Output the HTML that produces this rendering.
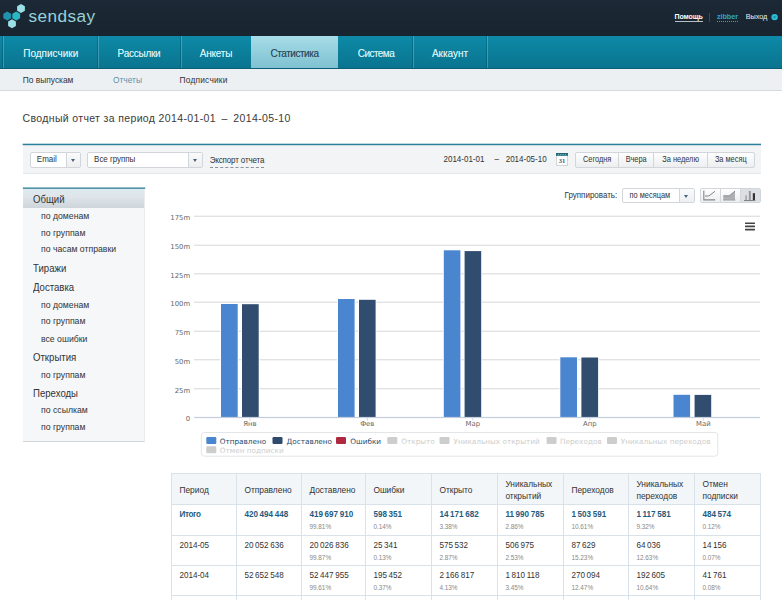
<!DOCTYPE html>
<html lang="ru">
<head>
<meta charset="utf-8">
<title>Sendsay — Сводный отчет</title>
<style>
*{box-sizing:border-box;margin:0;padding:0}
html,body{width:782px;height:600px;overflow:hidden;background:#fff}
body{font-family:"Liberation Sans","DejaVu Sans",sans-serif;color:#333;position:relative;font-size:8.4px}
.abs{position:absolute}
.t{position:absolute;white-space:nowrap;line-height:12px}
.y{display:inline-block;transform:scaleY(1.16);transform-origin:50% 64%}
#top{left:0;top:0;width:782px;height:36px;background:linear-gradient(#1c2936,#18242f)}
#logo-text{left:28.600px;top:6.0px;font-size:17.200px;color:#97d2d8;letter-spacing:.4px;line-height:20px}
#nav{left:0;top:35.500px;width:782px;height:33px;background:linear-gradient(#0d8aa8,#0a748f);border-bottom:1px solid #0a5f77}
.tab{position:absolute;top:0;height:32px;line-height:36px;text-align:center;color:#d2f1f6;font-size:10px;text-shadow:0 0 .5px rgba(210,241,246,.7);border-left:1px solid rgba(0,60,80,.3);box-shadow:inset 1px 0 0 rgba(255,255,255,.22);white-space:nowrap}
.tab.act{background:linear-gradient(#a6dce7,#7fc1d1);color:#2f4c5f;border-left:0;box-shadow:none;text-shadow:0 0 .4px rgba(47,76,95,.6)}
#sub{left:0;top:68.500px;width:782px;height:22px;background:#edf0f3;border-bottom:1px solid #d5dadf}
#sub span{position:absolute;top:0;line-height:22px;font-size:8.400px;color:#333;white-space:nowrap}
#title{left:22.500px;top:109.500px;font-size:10.500px;color:#3a3a3a;line-height:16px;white-space:nowrap;letter-spacing:.36px}
#tb{left:23px;top:144px;width:738px;height:30px;background:#f2f4f6;border-bottom:1px solid #e4e7ea}
.sel{position:absolute;height:16px;background:#fff;border:1px solid #d2d6db;border-radius:2px;font-size:8px;line-height:14px;color:#333;white-space:nowrap}
.sel i{position:absolute;right:0;top:0;width:14px;height:14px;border-left:1px solid #d2d6db;background:linear-gradient(#fafbfb,#eceef0)}
.sel i:after{content:"";position:absolute;left:4px;top:6px;border:2.500px solid transparent;border-top:3px solid #46627a}
.btns{position:absolute;border:1px solid #d2d6db;border-radius:2px;background:linear-gradient(#fefefe,#eceef0);overflow:hidden}
.btns b{position:absolute;top:0;height:100%;font-weight:normal;font-size:7.400px;line-height:13px;color:#333;text-align:center;border-left:1px solid #d2d6db;white-space:nowrap}
.btns b:first-child{border-left:0}
#side{left:23px;top:188px;width:122px;height:253.500px;background:#f5f7f9;border-top:1px solid #f5f7f9;border-bottom:1px solid #d3d7db;border-right:1px solid #eaedf0}
#side .on{position:absolute;left:0;top:0;width:100%;height:19px;background:linear-gradient(#dcebf0,#dfe5ea 40%,#cdd5db)}
#side .h{font-size:9.600px;color:#333;left:10px;transform:scaleY(1.1);transform-origin:0 25%}
#side .s{font-size:8.700px;color:#333;left:18px}
table{border-collapse:collapse;position:absolute;left:171px;top:473px;width:589px;font-size:8.400px;color:#333;table-layout:fixed}
td,th{border:1px solid #d9e1e9;text-align:left;vertical-align:top;padding:4px 0 0 7.400px;font-weight:normal;line-height:11px;white-space:nowrap}
th{background:#f2f6f9;height:31px;vertical-align:middle;padding-top:3px;line-height:11.500px}
td{height:30.330px;font-size:8.100px;word-spacing:-.6px}
td small{display:block;font-size:6.400px;color:#888;line-height:9px;margin-top:2px;word-spacing:0}
.yh{display:inline-block;transform:scaleY(1.06);transform-origin:0 60%}
.yd{display:inline-block;transform:scaleY(1.1);transform-origin:0 72%}
tr.tot td:first-child{letter-spacing:-.3px}
tr.tot td{color:#1f5c7e;font-weight:bold;height:30.800px}
tr.r2 td{height:30.100px}
tr.tot td small{font-weight:normal;color:#888}
</style>
</head>
<body>
<div id="top" class="abs">
  <svg class="abs" style="left:0;top:0" width="30" height="34" viewBox="0 0 30 34">
    <polygon points="21,3.900 24.900,6.150 24.900,10.650 21,12.900 17.100,10.650 17.100,6.150" fill="#9ae0e5"/>
    <polygon points="7.200,11.400 11.100,13.650 11.100,18.150 7.200,20.400 3.300,18.150 3.300,13.650" fill="#1f93ae"/>
    <polygon points="16.200,11.400 20.100,13.650 20.100,18.150 16.200,20.400 12.300,18.150 12.300,13.650" fill="#2bb6c4"/>
    <polygon points="12,19.200 15.900,21.450 15.900,25.950 12,28.200 8.100,25.950 8.100,21.450" fill="#9adfe6"/>
  </svg>
  <div id="logo-text" class="abs">sendsay</div>
  <span class="t" style="left:674.500px;top:12.500px;font-size:7px;font-weight:bold;color:#fff;border-bottom:1px solid #b9c0c6;line-height:8.500px;letter-spacing:-.1px">Помощь</span>
  <span class="abs" style="left:709px;top:13px;width:1px;height:9px;background:#3b4957"></span>
  <span class="t" style="left:717px;top:12.500px;font-size:7.300px;font-weight:bold;color:#2fa5ca;border-bottom:1px dotted #2fa5ca;line-height:8.500px;letter-spacing:-.1px">zibber</span>
  <span class="t" style="left:745.700px;top:12.500px;font-size:7.300px;color:#e8edf0;line-height:8.500px;letter-spacing:-.05px">Выход</span>
  <svg class="abs" style="left:770px;top:12px" width="10" height="10" viewBox="770 12 10 10"><circle cx="774.600" cy="17.100" r="3.200" fill="#2ebfd5"/><circle cx="774.600" cy="17.100" r="1.200" fill="#1d8da5"/></svg>
</div>
<div id="nav" class="abs">
  <div class="tab" style="left:2px;width:95px;padding-left:1.500px">Подписчики</div>
  <div class="tab" style="left:97px;width:83px;letter-spacing:-.25px">Рассылки</div>
  <div class="tab" style="left:180px;width:71px;letter-spacing:-.2px">Анкеты</div>
  <div class="tab act" style="left:251px;width:87px;letter-spacing:-.45px">Статистика</div>
  <div class="tab" style="left:338px;width:74px;border-left:0;box-shadow:none;letter-spacing:-.55px;padding-left:2px">Система</div>
  <div class="tab" style="left:412px;width:75px;padding-left:1px;border-right:1px solid rgba(0,60,80,.3);box-shadow:inset 1px 0 0 rgba(255,255,255,.22), 1px 0 0 rgba(255,255,255,.22)">Аккаунт</div>
</div>
<div id="sub" class="abs">
  <span style="left:22.800px">По выпускам</span>
  <span style="left:113px;color:#5c91a6">Отчеты</span>
  <span style="left:179.500px;letter-spacing:.2px">Подписчики</span>
</div>
<div id="title" class="abs">Сводный отчет за период 2014-01-01<span style="margin:0 2.330px"> – </span>2014-05-10</div>

<div id="tb" class="abs">
  <div class="sel" style="left:7px;top:8px;width:51px;padding-left:5.800px"><span class="y">Email</span><i></i></div>
  <div class="sel" style="left:64px;top:8px;width:116px;padding-left:6.100px;letter-spacing:-.05px"><span class="y">Все группы</span><i></i></div>
  <span class="t" style="left:186.700px;top:10px;font-size:8px;color:#333;border-bottom:1px dashed #8a9299;line-height:13px;letter-spacing:-.15px"><span class="y">Экспорт отчета</span></span>
  <span class="t" style="left:420.500px;top:10px;font-size:8px;color:#333"><span class="y">2014-01-01</span></span>
  <span class="t" style="left:471.500px;top:10px;font-size:8px;color:#333"><span class="y">–</span></span>
  <span class="t" style="left:482.700px;top:10px;font-size:8px;color:#333"><span class="y">2014-05-10</span></span>
  <svg class="abs" style="left:533px;top:9px" width="12" height="13" viewBox="0 0 12 13"><rect x="0.400" y="0.400" width="11.200" height="11.900" fill="#fff" stroke="#c3ccd3" stroke-width=".8"/><rect x="0" y="0" width="12" height="2.800" fill="#1f6a7b"/><g fill="#9fd0d6"><rect x="2" y="1" width="1" height=".8"/><rect x="4.300" y="1" width="1" height=".8"/><rect x="6.600" y="1" width="1" height=".8"/><rect x="8.900" y="1" width="1" height=".8"/></g><text x="6" y="9.800" font-size="6.500" font-weight="bold" text-anchor="middle" fill="#2b5b73" font-family="Liberation Serif, serif">31</text></svg>
  <div class="btns" style="left:552px;top:8px;width:179.500px;height:15.500px"><b style="left:0;width:42.300px"><span class="y">Сегодня</span></b><b style="left:42.300px;width:34.900px"><span class="y">Вчера</span></b><b style="left:77.200px;width:53.900px"><span class="y">За неделю</span></b><b style="left:131.100px;width:46.400px"><span class="y">За месяц</span></b></div>
</div>

<div id="side" class="abs">
  <div class="on"></div>
  <span class="t h" style="top:3.87px">Общий</span>
  <span class="t s" style="top:21.19px">по доменам</span>
  <span class="t s" style="top:37.99px">по группам</span>
  <span class="t s" style="top:54.29px">по часам отправки</span>
  <span class="t h" style="top:73.17px">Тиражи</span>
  <span class="t h" style="top:91.77px">Доставка</span>
  <span class="t s" style="top:110.29px">по доменам</span>
  <span class="t s" style="top:126.49px">по группам</span>
  <span class="t s" style="top:144.10px">все ошибки</span>
  <span class="t h" style="top:162.20px">Открытия</span>
  <span class="t s" style="top:179.59px">по группам</span>
  <span class="t h" style="top:198.30px">Переходы</span>
  <span class="t s" style="top:215.29px">по ссылкам</span>
  <span class="t s" style="top:231.59px">по группам</span>
</div>

<span class="t" style="left:564.500px;top:189.500px;font-size:8px;color:#333"><span class="y">Группировать:</span></span>
<div class="sel" style="left:622px;top:187.800px;width:73px;height:15.500px;line-height:13.500px;padding-left:6.600px;font-size:7.400px"><span class="y">по месяцам</span><i style="height:13px;width:15px"></i></div>
<div class="btns" style="left:700px;top:187.800px;width:60.500px;height:15.500px">
  <b style="left:0;width:19px"></b><b style="left:19px;width:20.400px"></b><b style="left:39.400px;width:21px;background:#dcdfe3"></b>
</div>
<svg class="abs" style="left:700px;top:187px" width="61" height="17" viewBox="700 187 61 17">
  <path d="M703.800 190.500V199.900H715.200" fill="none" stroke="#858585" stroke-width="1.100"/>
  <path d="M705 196H708.800L715 191.300" fill="none" stroke="#858585" stroke-width="1"/>
  <path d="M723.300 199.700V196H729.300L735 191.300V199.700Z" fill="#aeb1b4"/>
  <path d="M723.300 195.800H729.300L735 191.100" fill="none" stroke="#7d7d7d" stroke-width=".9"/>
  <path d="M723 200H735.300" fill="none" stroke="#8a8a8a" stroke-width=".9"/>
  <rect x="745.200" y="195.300" width="1.800" height="4.700" fill="#a9acaf"/>
  <rect x="748.800" y="191" width="2.100" height="9" fill="#9a9da0"/>
  <rect x="752.800" y="193.200" width="2.200" height="6.800" fill="#333"/>
  <path d="M744 200.500H755.300" fill="none" stroke="#777" stroke-width=".9"/>
</svg>

<svg class="abs" style="left:160px;top:205px" width="610" height="260" viewBox="160 205 610 260" font-family="DejaVu Sans, Liberation Sans, sans-serif">
  <g fill="#dadbdd">
    <rect x="194" y="215.700" width="566" height="1.100"/><rect x="194" y="244.700" width="566" height="1.100"/><rect x="194" y="273.200" width="566" height="1.100"/><rect x="194" y="301.700" width="566" height="1.100"/>
    <rect x="194" y="330.700" width="566" height="1.100"/><rect x="194" y="359.200" width="566" height="1.100"/><rect x="194" y="388.200" width="566" height="1.100"/>
    </g>
  <g font-size="6.900" fill="#666" text-anchor="end">
    <text x="190.200" y="220.300">175m</text><text x="190.200" y="249.300">150m</text><text x="190.200" y="277.800">125m</text><text x="190.200" y="306.300">100m</text>
    <text x="190.200" y="335.300">75m</text><text x="190.200" y="363.800">50m</text><text x="190.200" y="392.800">25m</text><text x="190.200" y="421.300">0</text>
  </g>
  <g fill="#4a86d0" stroke="#fff" stroke-width="1.6" paint-order="stroke">
    <rect x="221" y="304" width="16.700" height="113.500"/><rect x="338" y="299" width="16.600" height="118.500"/><rect x="443.800" y="250.300" width="16.600" height="167.200"/><rect x="560.300" y="357.300" width="16.700" height="60.200"/><rect x="673.500" y="394.800" width="16.600" height="22.700"/>
  </g>
  <g fill="#304c6e" stroke="#fff" stroke-width="1.6" paint-order="stroke">
    <rect x="242" y="304.200" width="16.700" height="113.300"/><rect x="359" y="299.800" width="16.600" height="117.700"/><rect x="464.600" y="251.100" width="16.600" height="166.400"/><rect x="581.400" y="357.500" width="16.700" height="60"/><rect x="694.600" y="394.900" width="16.600" height="22.600"/>
  </g>
  <g><rect x="194" y="416.900" width="566" height="1.200" fill="#c3cddd"/><rect x="249.5" y="418" width="1" height="2.600" fill="#cfd8e4"/><rect x="366.8" y="418" width="1" height="2.600" fill="#cfd8e4"/><rect x="472.3" y="418" width="1" height="2.600" fill="#cfd8e4"/><rect x="589.3" y="418" width="1" height="2.600" fill="#cfd8e4"/><rect x="702.8" y="418" width="1" height="2.600" fill="#cfd8e4"/></g>
  <g font-size="6.900" fill="#666" text-anchor="middle">
    <text x="250" y="426.300">Янв</text><text x="367.300" y="426.300">Фев</text><text x="472.800" y="426.300">Мар</text><text x="589.800" y="426.300">Апр</text><text x="703.300" y="426.300">Май</text>
  </g>
  <g fill="#444"><rect x="745" y="222.400" width="10" height="1.700" rx=".5"/><rect x="745" y="225.600" width="10" height="1.700" rx=".5"/><rect x="745" y="228.800" width="10" height="1.700" rx=".5"/></g>
  <rect x="201.300" y="432.500" width="516.500" height="23.700" rx="3" fill="#fff" stroke="#dfe3e7" stroke-width=".9"/>
  <g font-size="7.300">
    <rect x="206.300" y="437" width="10" height="6.900" rx="1.200" fill="#4a86d0"/><text x="219.700" y="443.700" fill="#274b6d">Отправлено</text>
    <rect x="272.500" y="437" width="10" height="6.900" rx="1.200" fill="#2f4a6c"/><text x="286.500" y="443.700" fill="#274b6d">Доставлено</text>
    <rect x="336" y="437" width="10" height="6.900" rx="1.200" fill="#b0283f"/><text x="350.300" y="443.700" fill="#274b6d">Ошибки</text>
    <g fill="#cdcdcd">
      <rect x="387.300" y="437" width="10" height="6.900" rx="1.200"/><text x="401.300" y="443.700">Открыто</text>
      <rect x="439.500" y="437" width="10" height="6.900" rx="1.200"/><text x="453.500" y="443.700">Уникальных открытий</text>
      <rect x="546.600" y="437" width="10" height="6.900" rx="1.200"/><text x="560" y="443.700">Переходов</text>
      <rect x="607" y="437" width="10" height="6.900" rx="1.200"/><text x="620.700" y="443.700">Уникальных переходов</text>
      <rect x="206.300" y="446.300" width="10" height="6.900" rx="1.200"/><text x="219.700" y="452.600">Отмен подписки</text>
    </g>
  </g>
</svg>

<table>
  <colgroup><col style="width:65px"><col style="width:65px"><col style="width:64px"><col style="width:66px"><col style="width:66px"><col style="width:66px"><col style="width:65px"><col style="width:66px"><col style="width:66px"></colgroup>
  <tr><th><span class="yh">Период</span></th><th><span class="yh">Отправлено</span></th><th><span class="yh">Доставлено</span></th><th><span class="yh">Ошибки</span></th><th><span class="yh">Открыто</span></th><th><span class="yh">Уникальных<br>открытий</span></th><th><span class="yh">Переходов</span></th><th><span class="yh">Уникальных<br>переходов</span></th><th><span class="yh">Отмен<br>подписки</span></th></tr>
  <tr class="tot"><td><span class="yd">Итого</span></td><td><span class="yd">420 494 448</span></td><td><span class="yd">419 697 910</span><small>99.81%</small></td><td><span class="yd">598 351</span><small>0.14%</small></td><td><span class="yd">14 171 682</span><small>3.38%</small></td><td><span class="yd">11 990 785</span><small>2.86%</small></td><td><span class="yd">1 503 591</span><small>10.61%</small></td><td><span class="yd">1 117 581</span><small>9.32%</small></td><td><span class="yd">484 574</span><small>0.12%</small></td></tr>
  <tr class="r2"><td><span class="yd">2014-05</span></td><td><span class="yd">20 052 636</span></td><td><span class="yd">20 026 836</span><small>99.87%</small></td><td><span class="yd">25 341</span><small>0.13%</small></td><td><span class="yd">575 532</span><small>2.87%</small></td><td><span class="yd">506 975</span><small>2.53%</small></td><td><span class="yd">87 629</span><small>15.23%</small></td><td><span class="yd">64 036</span><small>12.63%</small></td><td><span class="yd">14 156</span><small>0.07%</small></td></tr>
  <tr><td><span class="yd">2014-04</span></td><td><span class="yd">52 652 548</span></td><td><span class="yd">52 447 955</span><small>99.61%</small></td><td><span class="yd">195 452</span><small>0.37%</small></td><td><span class="yd">2 166 817</span><small>4.13%</small></td><td><span class="yd">1 810 118</span><small>3.45%</small></td><td><span class="yd">270 094</span><small>12.47%</small></td><td><span class="yd">192 605</span><small>10.64%</small></td><td><span class="yd">41 761</span><small>0.08%</small></td></tr>
  <tr><td><span class="yd">2014-03</span></td><td><span class="yd">146 104 117</span></td><td><span class="yd">145 689 204</span><small>99.72%</small></td><td><span class="yd">414 913</span><small>0.28%</small></td><td><span class="yd">4 812 330</span><small>3.30%</small></td><td><span class="yd">4 102 556</span><small>2.82%</small></td><td><span class="yd">498 215</span><small>10.35%</small></td><td><span class="yd">371 840</span><small>9.06%</small></td><td><span class="yd">160 322</span><small>0.11%</small></td></tr>
</table>
<svg class="abs" style="left:0;top:0;pointer-events:none" width="782" height="600" viewBox="0 0 782 600">
  <rect x="22.700" y="143.700" width="738.300" height="1.500" fill="#2a7f99"/>
  <rect x="22.900" y="187.450" width="122.300" height="1.400" fill="#37849b"/>
</svg>
</body>
</html>
